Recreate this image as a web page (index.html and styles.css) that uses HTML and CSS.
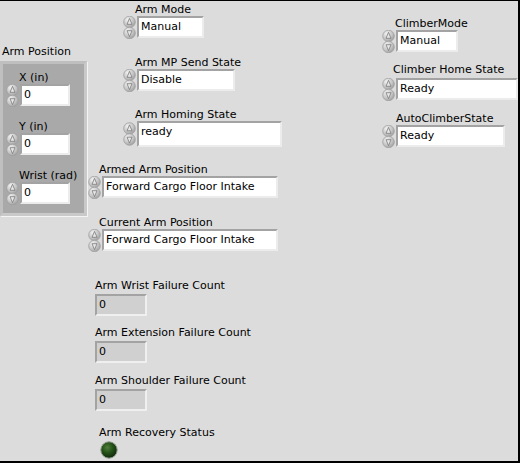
FILE: index.html
```html
<!DOCTYPE html>
<html>
<head>
<meta charset="utf-8">
<link rel="stylesheet" href="styles.css">
</head>
<body>
<svg width="0" height="0" class="defs">
  <defs>
    <radialGradient id="bg" cx="0.35" cy="0.3" r="0.8">
      <stop offset="0" stop-color="#f2f2f2"/>
      <stop offset="0.6" stop-color="#c2c2c2"/>
      <stop offset="1" stop-color="#959595"/>
    </radialGradient>
    <radialGradient id="led" cx="0.4" cy="0.35" r="0.7">
      <stop offset="0" stop-color="#4f7e3c"/>
      <stop offset="0.5" stop-color="#234f16"/>
      <stop offset="1" stop-color="#0c240a"/>
    </radialGradient>
    <symbol id="spin" viewBox="0 0 14 23">
      <circle cx="6.5" cy="6" r="5.8" fill="url(#bg)" stroke="#a0a0a0" stroke-width="0.8"/>
      <circle cx="6.5" cy="17" r="5.8" fill="url(#bg)" stroke="#a0a0a0" stroke-width="0.8"/>
      <path d="M6.5 2.4 L4 8.3 L9 8.3 Z" fill="#e8e8e8" stroke="#7a7a7a" stroke-width="0.8" stroke-linejoin="round"/>
      <path d="M6.5 20.6 L4 14.7 L9 14.7 Z" fill="#e8e8e8" stroke="#7a7a7a" stroke-width="0.8" stroke-linejoin="round"/>
    </symbol>
  </defs>
</svg>
<div class="panel">
  <div class="col col-left">
    <div class="lbl cl-title">Arm Position</div>
    <div class="cluster">
      <div class="ctl cx">
        <div class="lbl pad-c">X (in)</div>
        <div class="row"><svg class="spin"><use href="#spin"/></svg><div class="fld w50">0</div></div>
      </div>
      <div class="ctl cy">
        <div class="lbl pad-c">Y (in)</div>
        <div class="row"><svg class="spin"><use href="#spin"/></svg><div class="fld w50">0</div></div>
      </div>
      <div class="ctl cy">
        <div class="lbl pad-c">Wrist (rad)</div>
        <div class="row"><svg class="spin"><use href="#spin"/></svg><div class="fld w50">0</div></div>
      </div>
    </div>
  </div>

  <div class="col col-mid">
    <div class="ctl m-mode">
      <div class="lbl pad-12">Arm Mode</div>
      <div class="row"><svg class="spin"><use href="#spin"/></svg><div class="fld w67">Manual</div></div>
    </div>
    <div class="ctl m-mp">
      <div class="lbl pad-12">Arm MP Send State</div>
      <div class="row"><svg class="spin"><use href="#spin"/></svg><div class="fld w98">Disable</div></div>
    </div>
    <div class="ctl m-home">
      <div class="lbl pad-12">Arm Homing State</div>
      <div class="row"><svg class="spin tall"><use href="#spin"/></svg><div class="fld w145 h26">ready</div></div>
    </div>
    <div class="ctl m-armed">
      <div class="lbl pad-11">Armed Arm Position</div>
      <div class="row"><svg class="spin"><use href="#spin"/></svg><div class="fld w176">Forward Cargo Floor Intake</div></div>
    </div>
    <div class="ctl m-cur">
      <div class="lbl pad-11">Current Arm Position</div>
      <div class="row"><svg class="spin"><use href="#spin"/></svg><div class="fld w176">Forward Cargo Floor Intake</div></div>
    </div>
    <div class="ctl m-fail first">
      <div class="lbl">Arm Wrist Failure Count</div>
      <div class="ind">0</div>
    </div>
    <div class="ctl m-fail second">
      <div class="lbl">Arm Extension Failure Count</div>
      <div class="ind">0</div>
    </div>
    <div class="ctl m-fail">
      <div class="lbl">Arm Shoulder Failure Count</div>
      <div class="ind">0</div>
    </div>
    <div class="ctl m-rec">
      <div class="lbl pad-4">Arm Recovery Status</div>
      <svg class="led" viewBox="0 0 18 18"><circle cx="9" cy="9" r="8.2" fill="url(#led)" stroke="#8f9a8c" stroke-width="1"/></svg>
    </div>
  </div>

  <div class="col col-right">
    <div class="ctl r-mode">
      <div class="lbl pad-13">ClimberMode</div>
      <div class="row"><svg class="spin"><use href="#spin"/></svg><div class="fld w62">Manual</div></div>
    </div>
    <div class="ctl r-home">
      <div class="lbl pad-11">Climber Home State</div>
      <div class="row rgap"><svg class="spin"><use href="#spin"/></svg><div class="fld w122">Ready</div></div>
    </div>
    <div class="ctl r-auto">
      <div class="lbl pad-14">AutoClimberState</div>
      <div class="row"><svg class="spin"><use href="#spin"/></svg><div class="fld w109">Ready</div></div>
    </div>
  </div>
</div>
</body>
</html>
```

FILE: styles.css
```css
html, body {
  margin: 0;
  padding: 0;
  background: #dcdcdc;
}
.defs {
  position: absolute;
  width: 0;
  height: 0;
}
.panel {
  display: flex;
  width: 520px;
  height: 463px;
  box-sizing: border-box;
  border-top: 1px solid #000;
  border-right: 2px solid #000;
  border-bottom: 2px solid #000;
  background: #dcdcdc;
  overflow: hidden;
  font-family: "DejaVu Sans", Verdana, sans-serif;
  font-size: 11px;
  color: #000;
}
.col {
  display: flex;
  flex-direction: column;
  align-items: flex-start;
}
.col-left {
  width: 88px;
  padding-top: 42px;
}
.col-mid {
  width: 294px;
}
.col-right {
  flex: 1;
}
.lbl {
  line-height: 17px;
  height: 15px;
  white-space: nowrap;
}
.ctl {
  display: flex;
  flex-direction: column;
  align-items: flex-start;
}
.row {
  display: flex;
  align-items: flex-start;
}
.spin {
  width: 14px;
  height: 23px;
  flex: none;
}
.spin.tall {
  height: 26px;
}
.fld {
  box-sizing: border-box;
  height: 22px;
  line-height: 18px;
  padding-left: 2px;
  background: #fff;
  border: 2px solid;
  border-color: #a3a3a3 #ececec #ececec #a3a3a3;
  white-space: nowrap;
  overflow: hidden;
}
.h26 { height: 26px; }
.w50 { width: 50px; }
.w62 { width: 62px; }
.w67 { width: 67px; }
.w98 { width: 98px; }
.w109 { width: 109px; }
.w122 { width: 122px; }
.w145 { width: 145px; }
.w176 { width: 176px; }

.pad-4 { padding-left: 4px; }
.pad-11 { padding-left: 11px; }
.pad-12 { padding-left: 12px; }
.pad-13 { padding-left: 13px; }
.pad-14 { padding-left: 14px; }
.pad-c { padding-left: 13px; }

/* cluster */
.cl-title {
  padding-left: 2px;
}
.cluster {
  margin-top: 3px;
  box-sizing: border-box;
  width: 87px;
  height: 155px;
  background: #a9a9a9;
  border: 3px solid;
  border-color: #bfbfbf #c9c9c9 #c9c9c9 #bfbfbf;
  box-shadow: 1px 1px 0 #f4f4f4;
  padding-left: 3px;
  display: flex;
  flex-direction: column;
}
.cx { margin-top: 5px; }
.cy { margin-top: 11px; }

/* middle column */
.m-mode { margin-left: 35px; margin-top: 0; }
.m-mp { margin-left: 35px; margin-top: 15px; }
.m-home { margin-left: 35px; margin-top: 14px; }
.m-armed { margin-top: 14px; }
.m-cur { margin-top: 15px; }
.m-fail { margin-left: 7px; margin-top: 9px; }
.m-fail.first { margin-top: 25px; }
.m-fail.second { margin-top: 8px; }
.ind {
  box-sizing: border-box;
  margin-top: 2px;
  width: 52px;
  height: 22px;
  line-height: 18px;
  padding-left: 2px;
  background: #d0d0d0;
  border: 2px solid;
  border-color: #a3a3a3 #efefef #efefef #a3a3a3;
}
.m-rec { margin-left: 7px; margin-top: 13px; }
.led {
  width: 18px;
  height: 18px;
  margin-left: 5px;
  margin-top: 2px;
}

/* right column */
.r-mode { margin-top: 14px; }
.r-home { margin-top: 8px; }
.r-auto { margin-top: 9px; }
.rgap { margin-top: 2px; }
```
